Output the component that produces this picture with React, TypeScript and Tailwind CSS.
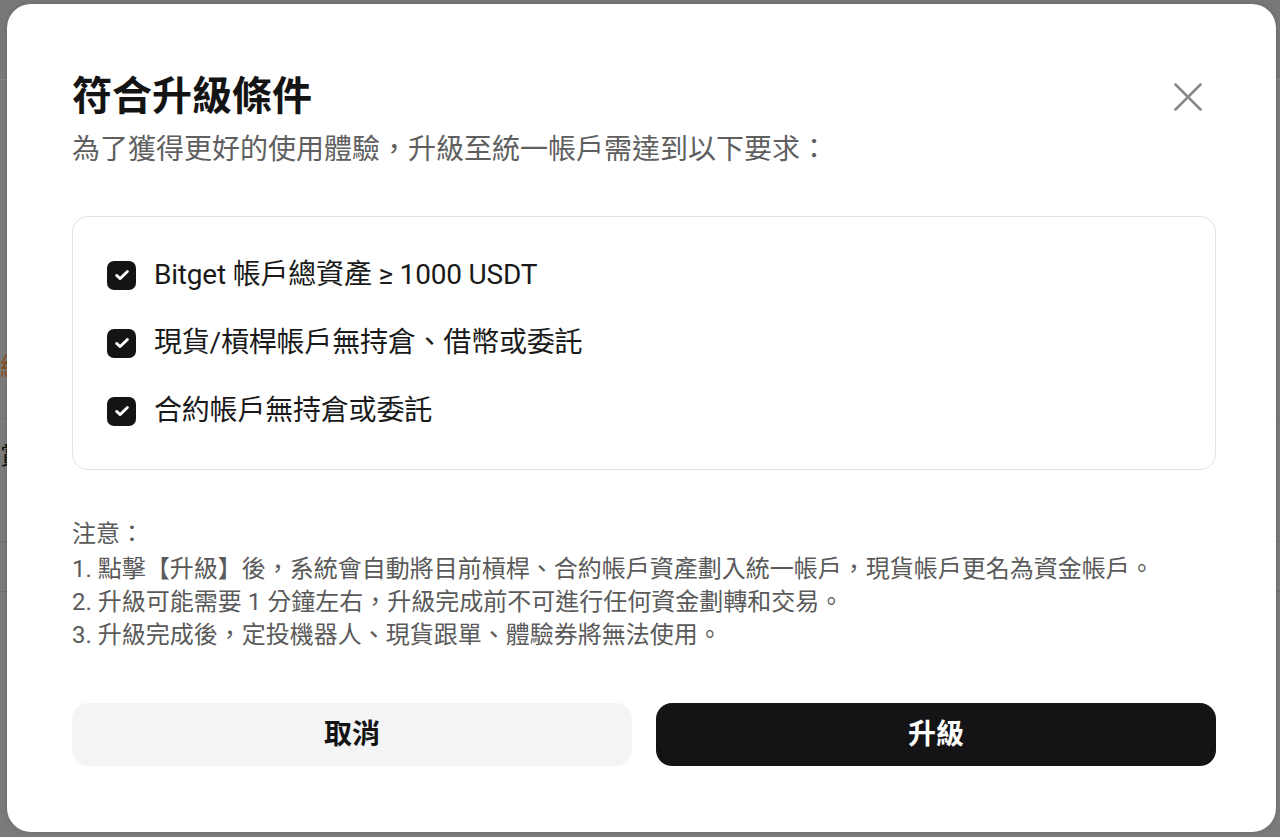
import React from "react";

const font = { fontFamily: "Roboto, 'Noto Sans CJK TC', 'Noto Sans CJK SC', sans-serif" };

function Check() {
  return (
    <div className="flex h-[29px] w-[29px] shrink-0 items-center justify-center rounded-[7px] bg-[#141416]">
      <svg width="18" height="18" viewBox="0 0 18 18" fill="none">
        <path d="M3.6 9.4 L7.2 12.6 L14.4 5.4" stroke="white" strokeWidth="2.8" strokeLinecap="round" strokeLinejoin="round" />
      </svg>
    </div>
  );
}

const items = [
  "Bitget 帳戶總資產 ≥ 1000 USDT",
  "現貨/槓桿帳戶無持倉、借幣或委託",
  "合約帳戶無持倉或委託",
];

const notes = [
  "1. 點擊【升級】後，系統會自動將目前槓桿、合約帳戶資產劃入統一帳戶，現貨帳戶更名為資金帳戶。",
  "2. 升級可能需要 1 分鐘左右，升級完成前不可進行任何資金劃轉和交易。",
  "3. 升級完成後，定投機器人、現貨跟單、體驗券將無法使用。",
];

export default function App() {
  return (
    <div className="relative h-[837px] w-full overflow-hidden bg-[#7a7a7a]" style={font}>
      {/* dimmed page behind the dialog */}
      <div className="flex h-full flex-col">
        <div className="h-[80px] border-b border-[#858585] bg-[#777777]" />
        <div className="relative flex-1">
          <div className="mt-[272px] text-[24px] leading-[30px] text-[#8a4e1c]">結</div>
          <div className="mt-[36px] h-px bg-[#707070]" />
          <div className="mt-[22px] text-[24px] leading-[30px] text-[#111]">賞</div>
          <div className="mt-[70px] h-px bg-[#6e6e6e]" />
          <div className="mt-[49px] h-px bg-[#6e6e6e]" />
        </div>
      </div>

      {/* dialog */}
      <div className="absolute left-[7px] top-[4px] flex h-[828px] w-[1269px] flex-col rounded-[24px] bg-white pl-[65px] pr-[60px] pt-[69px] shadow-[0_0_4px_rgba(0,0,0,0.15)]">
        <div className="flex h-[48px] items-center justify-between">
          <h1 className="text-[40px] font-bold leading-[48px] text-[#141414]">符合升級條件</h1>
          <button className="mr-[14px] flex h-[28px] w-[28px] items-center justify-center">
            <svg width="28" height="28" viewBox="0 0 28 28" fill="none">
              <path d="M1.5 1.5 L26.5 26.5 M26.5 1.5 L1.5 26.5" stroke="#8a8a8a" strokeWidth="2.6" strokeLinecap="round" />
            </svg>
          </button>
        </div>
        <p className="mt-[9px] text-[28px] leading-[40px] text-[#5f5f5f]">
          為了獲得更好的使用體驗，升級至統一帳戶需達到以下要求：
        </p>

        <div className="mt-[46px] flex flex-col gap-[28px] rounded-[16px] border border-[#e2e2e2] py-[38px] pl-[34px]">
          {items.map((t) => (
            <div key={t} className="flex h-[40px] items-center gap-[18px]">
              <Check />
              <span className="text-[28px] leading-[40px] tracking-[-0.2px] text-[#1a1a1a]">{t}</span>
            </div>
          ))}
        </div>

        <div className="mt-[48px] text-[24px] leading-[33px] text-[#5a5a5a]">
          <div>注意：</div>
          <div className="mt-[2px]">
            {notes.map((n) => (
              <div key={n}>{n}</div>
            ))}
          </div>
        </div>

        <div className="mt-[51px] flex gap-[24px]">
          <button className="h-[63px] flex-1 rounded-[16px] bg-[#f3f4f6] text-[28px] font-bold text-[#141414]">取消</button>
          <button className="h-[63px] flex-1 rounded-[16px] bg-[#141416] text-[28px] font-bold text-white">升級</button>
        </div>
      </div>
    </div>
  );
}
